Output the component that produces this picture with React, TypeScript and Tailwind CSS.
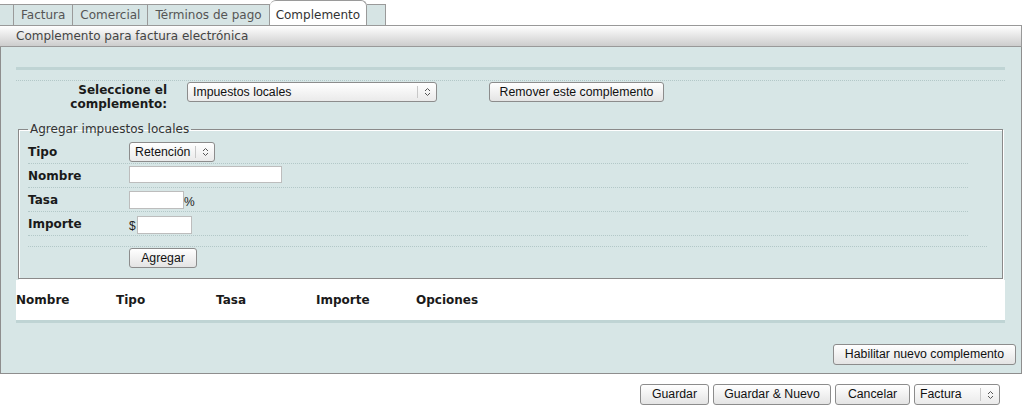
import type { ReactNode } from "react";

const uiFont = "font-['Liberation_Sans',Arial,sans-serif]";

function Chevrons() {
  return (
    <svg width="7" height="10" viewBox="0 0 7 10" fill="none" stroke="#555" strokeWidth="1">
      <path d="M1 4 L3.5 1.5 L6 4" />
      <path d="M1 6 L3.5 8.5 L6 6" />
    </svg>
  );
}

function Button({ children, className = "" }: { children: ReactNode; className?: string }) {
  return (
    <button
      type="button"
      className={`${uiFont} flex items-center justify-center rounded-[3px] border border-[#8c8c8c] bg-linear-to-b from-white to-[#e4e4e4] text-[12.3px] leading-none text-[#111] ${className}`}
    >
      {children}
    </button>
  );
}

function Select({ value, className = "" }: { value: string; className?: string }) {
  return (
    <div
      className={`${uiFont} flex items-stretch rounded-[3px] border border-[#8c8c8c] bg-linear-to-b from-white to-[#eaeaea] text-[12.3px] text-[#111] ${className}`}
    >
      <span className="flex flex-1 items-center pl-[5px]">{value}</span>
      <span className="my-[3px] flex w-[19px] items-center justify-center border-l border-[#c8c8c8]">
        <Chevrons />
      </span>
    </div>
  );
}

function FieldRow({ label, children }: { label: string; children: ReactNode }) {
  return (
    <div className="flex h-[24px] items-start border-b border-dotted border-[#b3c8c8] pt-[2px]">
      <span className="w-[101px] font-bold leading-[20px] text-[#1a1a1a]">{label}</span>
      {children}
    </div>
  );
}

const tabs = ["Factura", "Comercial", "Términos de pago"];
const columns = ["Nombre", "Tipo", "Tasa", "Importe", "Opciones"];

export default function App() {
  return (
    <div className="w-[1022px] bg-white font-['DejaVu_Sans',sans-serif] text-[12px]">
      {/* tab strip */}
      <div className="flex h-[25px] items-end">
        <div className="h-[21px] w-[14px] border-t border-r border-[#9a9a9a] bg-[#d6e4e4]" />
        {tabs.map((tab) => (
          <div
            key={tab}
            className="h-[21px] border-t border-r border-[#9a9a9a] bg-[#d6e4e4] px-[7px] leading-[20px] text-[#555]"
          >
            {tab}
          </div>
        ))}
        <div className="h-[25px] rounded-t-[6px] border-t border-r border-[#9a9a9a] bg-white px-[6px] pt-[4px] leading-[20px] text-[#333]">
          Complemento
        </div>
        <div className="h-[21px] w-[19px] border-t border-r border-[#9a9a9a] bg-[#d6e4e4]" />
      </div>

      <div className="h-[22px] border-y border-r border-[#999] bg-linear-to-b from-white to-[#cdcdcd] pl-4 leading-[20px] text-[#444]">
        Complemento para factura electrónica
      </div>

      <div className="border-x border-b border-[#8e8e8e] bg-[#d7e6e6]">
        <div className="pl-[15px] pr-[16px] pt-5">
          <div className="h-[3px] bg-[#bfd4d4]" />
          <div className="mt-[10px] border-t border-dotted border-[#b3c8c8]" />

          <div className="flex items-start pt-[1px]">
            <div className="w-[151px] pt-[1px] text-right font-bold leading-[14px] text-[#1a1a1a]">
              Seleccione el
              <br />
              complemento:
            </div>
            <Select value="Impuestos locales" className="ml-[20px] h-[20px] w-[250px]" />
            <Button className="ml-[52px] h-[20px] w-[175px]">Remover este complemento</Button>
          </div>

          <fieldset className="mx-[2px] mt-[11px] border border-[#8a8a8a] px-[9px] pb-[10px] shadow-[inset_1px_1px_0_#fff,1px_1px_0_#fff]">
            <legend className="ml-0 px-[2px] leading-[15px] text-[#333]">Agregar impuestos locales</legend>
            <div className="w-[940px] pt-[3px]">
              <FieldRow label="Tipo">
                <Select value="Retención" className="h-[20px] w-[86px]" />
              </FieldRow>
              <FieldRow label="Nombre">
                <input className="h-[17px] w-[153px] border border-[#bdbdbd] bg-white" />
              </FieldRow>
              <FieldRow label="Tasa">
                <input className="mt-[1px] h-[18px] w-[55px] border border-[#bdbdbd] bg-white" />
                <span className={`${uiFont} pt-[3px] text-[12px] text-[#222]`}>%</span>
              </FieldRow>
              <FieldRow label="Importe">
                <span className={`${uiFont} w-[8px] pt-[3px] text-[12px] text-[#222]`}>$</span>
                <input className="mt-[2px] h-[18px] w-[55px] border border-[#bdbdbd] bg-white" />
              </FieldRow>
            </div>
            <div className="mt-[10px] w-[959px] border-t border-dotted border-[#b3c8c8] pl-[101px] pt-[1px]">
              <Button className="h-[20px] w-[68px]">Agregar</Button>
            </div>
          </fieldset>

          <div className="mt-[1px] flex h-[43px] items-center border-b-[3px] border-[#bfd4d4] bg-white">
            {columns.map((col) => (
              <span key={col} className="w-[100px] font-bold text-[#1a1a1a]">
                {col}
              </span>
            ))}
          </div>
        </div>

        <div className="flex justify-end pb-[8px] pr-[5px] pt-[21px]">
          <Button className="h-[21px] w-[183px]">Habilitar nuevo complemento</Button>
        </div>
      </div>

      <div className="flex justify-end gap-[4px] pr-[22px] pt-[10px]">
        <Button className="h-[21px] w-[69px]">Guardar</Button>
        <Button className="h-[21px] w-[118px]">Guardar &amp; Nuevo</Button>
        <Button className="h-[21px] w-[75px]">Cancelar</Button>
        <Select value="Factura" className="h-[21px] w-[86px]" />
      </div>
    </div>
  );
}
